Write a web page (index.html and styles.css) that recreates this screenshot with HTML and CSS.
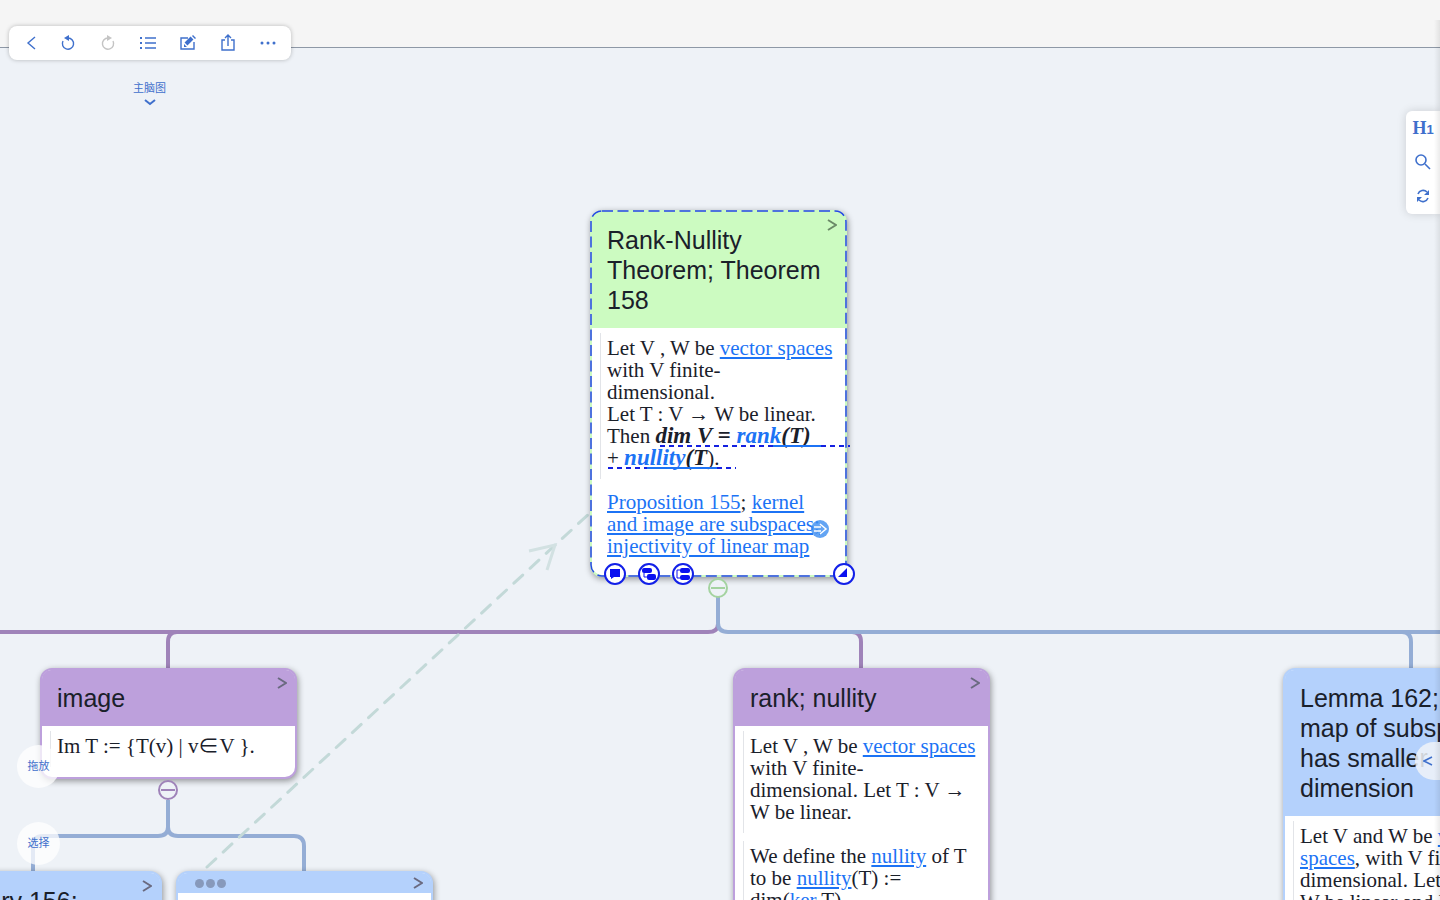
FILE: index.html
```html
<!DOCTYPE html>
<html lang="zh-CN">
  <head>
    <meta charset="UTF-8" />
    <meta name="viewport" content="width=device-width, initial-scale=1.0" />
    <title>Rank-Nullity Theorem</title>
    <link rel="stylesheet" href="styles.css">
  </head>

  <body>
    <div class="app">
      <header class="topbar"></header>

      <main class="canvas">
        <svg class="connectors" aria-hidden="true">
          <!-- root to children -->
          <path class="line purple" d="M0 584H708Q718 584 718 576" />
          <path class="line purple" d="M168 621V594Q168 584 177 584" />
          <path class="line purple" d="M861 621V594Q861 584 852 584" />
          <path class="line blue" d="M1411 621V594Q1411 584 1402 584" />
          <path class="line blue" d="M718 548V575Q718 584 728 584H3000" />
          <!-- image to children -->
          <path class="line blue" d="M168 752V779Q168 788 158 788H43Q33 788 33 798V826" />
          <path class="line blue" d="M168 779Q168 788 178 788H294Q304 788 304 798V826" />
          <!-- relation -->
          <path class="relation" d="M207 819L592 463" />
          <path class="relation-head" d="M529 503L555 497L547 522" />
        </svg>

        <article class="card green root">
          <header class="card-head">
            <h2>Rank-Nullity<br>Theorem; Theorem<br>158</h2>
            <button class="expand" aria-label="Expand"><svg width="10" height="12"><path d="M1 1L9 6L1 11" /></svg></button>
          </header>
          <div class="card-body">
            <p class="note">
              Let V , W be <a href="#">vector spaces</a><br>
              with V finite-<br>
              dimensional.<br>
              Let T : V → W be linear.<br>
              Then <b>dim V = <a class="plain" href="#">rank</a>(T)</b><br>
              + <b><a class="plain" href="#">nullity</a>(T</b>).
            </p>
            <p class="note no-bar">
              <a href="#">Proposition 155</a>; <a href="#">kernel</a><br>
              <a href="#">and image are subspaces;</a><br>
              <a href="#">injectivity of linear map</a>
            </p>
          </div>
          <svg class="selection" aria-hidden="true">
            <rect class="outline" x="1" y="1" rx="11" />
            <path class="mark-dash" d="M70 236H183M231 236H260M18 258H57M127 258H146" />
            <path class="mark" d="M183 236H231M57 258H127" />
          </svg>
          <button class="jump" aria-label="Go to link">
            <svg width="18" height="18"><path d="M3 7H10M3 11H10M9 4L15 9L9 14" /></svg>
          </button>
          <div class="handles">
            <button class="handle" aria-label="Comment">
              <svg width="22" height="22"><path d="M6 6H16V14H10L7 16V14H6Z" /></svg>
            </button>
            <button class="handle" aria-label="Add child">
              <svg width="22" height="22"><rect x="4" y="5" width="10" height="5" rx="2" /><rect x="9" y="11" width="9" height="6" rx="2" /><path class="thin" d="M6 10V14H9" /></svg>
            </button>
            <button class="handle" aria-label="Add sibling">
              <svg width="22" height="22"><rect x="8" y="5" width="10" height="5" rx="2" /><rect x="8" y="12" width="10" height="5" rx="2" /><path class="thin" d="M8 7H5V15H8" /></svg>
            </button>
            <button class="handle resize" aria-label="Resize">
              <svg width="22" height="22"><path d="M14 5V14H5Z" /></svg>
            </button>
          </div>
          <button class="fold" aria-label="Collapse"></button>
        </article>

        <article class="card purple image">
          <header class="card-head">
            <h2>image</h2>
            <button class="expand" aria-label="Expand"><svg width="10" height="12"><path d="M1 1L9 6L1 11" /></svg></button>
          </header>
          <div class="card-body">
            <p class="note">Im T := {T(v) | v∈V }.</p>
          </div>
          <button class="fold" aria-label="Collapse"></button>
        </article>

        <article class="card purple rank">
          <header class="card-head">
            <h2>rank; nullity</h2>
            <button class="expand" aria-label="Expand"><svg width="10" height="12"><path d="M1 1L9 6L1 11" /></svg></button>
          </header>
          <div class="card-body">
            <p class="note">
              Let V , W be <a href="#">vector spaces</a><br>
              with V finite-<br>
              dimensional. Let T : V →<br>
              W be linear.
            </p>
            <p class="note">
              We define the <a href="#">nullity</a> of T<br>
              to be <a href="#">nullity</a>(T) :=<br>
              dim(<a href="#">ker</a> T)
            </p>
          </div>
        </article>

        <article class="card blue lemma">
          <header class="card-head">
            <h2>Lemma 162;<br>map of subspace<br>has smaller<br>dimension</h2>
          </header>
          <div class="card-body">
            <p class="note">
              Let V and W be <a href="#">vector</a><br>
              <a href="#">spaces</a>, with V finite-<br>
              dimensional. Let T : V →<br>
              W be linear and U ≤ V
            </p>
          </div>
        </article>

        <article class="card blue corollary">
          <header class="card-head">
            <h2>Corollary 156;</h2>
            <button class="expand" aria-label="Expand"><svg width="10" height="12"><path d="M1 1L9 6L1 11" /></svg></button>
          </header>
        </article>

        <article class="card blue untitled">
          <header class="card-head">
            <span class="dots"><i></i><i></i><i></i></span>
            <button class="expand" aria-label="Expand"><svg width="10" height="12"><path d="M1 1L9 6L1 11" /></svg></button>
          </header>
          <div class="card-body"></div>
        </article>
      </main>

      <nav class="toolbar">
        <button class="back" aria-label="Back"><svg width="18" height="18"><path d="M12 3L5 9L12 15" /></svg></button>
        <button aria-label="Undo"><svg width="18" height="18"><path d="M4 7A5.6 5.6 0 1 0 9 4" /><path class="fill" d="M10 1V7L5 4Z" /></svg></button>
        <button class="off" aria-label="Redo" disabled><svg width="18" height="18"><path d="M14 7A5.6 5.6 0 1 1 9 4" /><path class="fill" d="M8 1V7L13 4Z" /></svg></button>
        <button aria-label="Outline"><svg width="18" height="18"><path d="M6 4H17M6 9H17M6 14H17" /><path class="fill" d="M1 3H3V5H1ZM1 8H3V10H1ZM1 13H3V15H1Z" /></svg></button>
        <button aria-label="Edit"><svg width="18" height="18"><path d="M9 4H2V15H15V8" /><path class="pen" d="M7 10L13 4" /><path class="fill" d="M5 13L5 10L8 13ZM14 1L17 4L16 5L13 2Z" /></svg></button>
        <button aria-label="Share"><svg width="18" height="18"><path d="M6 6H3V16H15V6H12M9 12V2M6 4L9 1L12 4" /></svg></button>
        <button aria-label="More"><svg width="18" height="18"><circle class="fill" cx="3" cy="9" r="1.5" /><circle class="fill" cx="9" cy="9" r="1.5" /><circle class="fill" cx="15" cy="9" r="1.5" /></svg></button>
      </nav>

      <button class="map-name">
        主脑图
        <svg width="12" height="7"><path d="M1 1L6 5L11 1" /></svg>
      </button>

      <aside class="dock">
        <button class="heading" aria-label="Heading 1">H<small>1</small></button>
        <button aria-label="Search"><svg width="18" height="18"><circle cx="7" cy="7" r="5" /><path d="M11 11L16 16" /></svg></button>
        <button aria-label="Sync"><svg width="18" height="18"><path d="M4 7A5.5 5.5 0 0 1 13 5M14 11A5.5 5.5 0 0 1 5 13" /><path class="fill" d="M15 3V8H10ZM3 15V10H8Z" /></svg></button>
      </aside>

      <div class="modes">
        <button>拖放</button>
        <button>选择</button>
      </div>

      <button class="drawer" aria-label="Open drawer"><svg width="10" height="10"><path d="M9 1L1 5L9 9" /></svg></button>
      <div class="edge"></div>
    </div>
  </body>
</html>
```
FILE: styles.css
```css
* {
  box-sizing: border-box;
}

body {
  margin: 0;
  font-family: "Liberation Sans", "Noto Sans CJK SC", sans-serif;
  color: #1a202a;
}

button {
  border: none;
  padding: 0;
  background: none;
  color: #3f70cc;
  font-family: inherit;
  cursor: pointer;
}

svg {
  display: block;
  fill: none;
  stroke: currentColor;
}

.app {
  position: relative;
  display: flex;
  flex-direction: column;
  height: 100vh;
  overflow: hidden;
}

.topbar {
  height: 48px;
  background-color: #f5f5f5;
  border-bottom: 1px solid #8e98a6;
}

/* Map */
.canvas {
  position: relative;
  flex: 1;
  overflow: hidden;
  background-color: #eef2f7;
}

.connectors {
  position: absolute;
  width: 100%;
  height: 100%;
}

.line {
  stroke-width: 4;
}

.line.purple {
  stroke: #9f83b9;
}

.line.blue {
  stroke: #94add5;
}

.relation {
  stroke: #c3d9d8;
  stroke-width: 3;
  stroke-dasharray: 12 10;
  stroke-linecap: round;
}

.relation-head {
  stroke: #d2e1e2;
  stroke-width: 3;
}

/* Cards */
.card {
  position: absolute;
  width: 257px;
  border: 2px solid;
  border-radius: 12px;
  background-color: #fff;
  box-shadow: 1px 2px 6px rgba(0, 0, 0, 0.4);
}

.card.green {
  border-color: #ccfbc1;
}

.card.purple {
  border-color: #bda0dc;
}

.card.blue {
  border-color: #b4d1fc;
}

.root {
  left: 590px;
  top: 162px;
  min-height: 367px;
}

.image {
  left: 40px;
  top: 620px;
  min-height: 111px;
}

.rank {
  left: 733px;
  top: 620px;
}

.lemma {
  left: 1283px;
  top: 620px;
}

.corollary {
  left: -95px;
  top: 823px;
}

.untitled {
  left: 176px;
  top: 823px;
}

.card-head {
  display: flex;
  justify-content: space-between;
  align-items: flex-start;
  padding: 13px 8px 13px 15px;
  border-radius: 9px 9px 0 0;
}

.green .card-head {
  background-color: #ccfbc1;
}

.purple .card-head {
  background-color: #bda0dc;
}

.blue .card-head {
  background-color: #b4d1fc;
}

h2 {
  margin: 0;
  font-size: 25px;
  font-weight: normal;
  line-height: 30px;
  white-space: nowrap;
}

.expand {
  margin-top: -6px;
  color: #6a6a80;
}

.green .expand {
  color: #6b8a68;
}

.expand svg {
  stroke-width: 2;
}

.untitled .card-head {
  align-items: center;
  padding: 4px 8px 4px 15px;
}

.untitled .expand {
  margin: 0;
}

.untitled .card-body {
  height: 60px;
}

.dots {
  display: flex;
  gap: 2px;
  padding-left: 2px;
}

.dots i {
  width: 9px;
  height: 9px;
  border-radius: 50%;
  background-color: #8799bb;
}

.card-body {
  padding: 5px 0 6px 8px;
}

.note {
  margin: 0;
  padding: 4px 0 10px 6px;
  border-left: 1px solid #e2e4e8;
  font-family: "Liberation Serif", serif;
  font-size: 21px;
  line-height: 22px;
  white-space: nowrap;
}

.note + .note {
  margin-top: 8px;
}

.note.no-bar {
  border-color: transparent;
}

.note b {
  font-size: 23px;
  font-style: italic;
}

.note a {
  color: #1c73f5;
  text-underline-offset: 2px;
}

.note .plain {
  text-decoration: none;
}

/* Selected card */
.selection {
  position: absolute;
  left: -2px;
  top: -2px;
  width: calc(100% + 4px);
  height: calc(100% + 4px);
  overflow: visible;
  pointer-events: none;
}

.outline {
  width: calc(100% - 2px);
  height: calc(100% - 2px);
  stroke: #2546e8;
  stroke-width: 1.5;
  stroke-dasharray: 11 4.5;
}

.mark-dash {
  stroke: #1420e0;
  stroke-width: 2;
  stroke-dasharray: 5 4;
}

.mark {
  stroke: #1c73f5;
  stroke-width: 2;
}

.jump {
  position: absolute;
  right: 16px;
  bottom: 37px;
  border-radius: 50%;
  background-color: rgba(60, 141, 240, 0.8);
  color: #fff;
}

.jump svg {
  stroke-width: 1.5;
}

.handles {
  position: absolute;
  left: 12px;
  right: -10px;
  bottom: -10px;
  display: flex;
  gap: 12px;
}

.handle {
  width: 22px;
  height: 22px;
  border: 2px solid #1220e8;
  border-radius: 50%;
  background-color: #fff;
  color: #0a10f0;
}

.handle svg {
  margin: -2px;
  fill: currentColor;
  stroke: none;
}

.handle .thin {
  fill: none;
  stroke: currentColor;
}

.handle.resize {
  margin-left: auto;
}

.fold {
  position: absolute;
  left: calc(50% - 11px);
  bottom: -23px;
  display: flex;
  align-items: center;
  justify-content: center;
  width: 20px;
  height: 20px;
  border: 2px solid #9f83b9;
  border-radius: 50%;
  background-color: #eef2f7;
  color: #9f83b9;
}

.fold::before {
  content: "";
  width: 14px;
  height: 2px;
  background-color: currentColor;
}

.green .fold {
  border-color: #a4d3a0;
  color: #a4d3a0;
}

/* Floating controls */
.toolbar {
  position: absolute;
  left: 9px;
  top: 26px;
  display: flex;
  padding: 0 3px 0 7px;
  border-radius: 8px;
  background-color: #fff;
  box-shadow: 0 0 4px rgba(0, 0, 0, 0.25);
}

.toolbar button {
  display: flex;
  align-items: center;
  justify-content: center;
  width: 40px;
  height: 34px;
}

.toolbar .back {
  width: 32px;
}

.toolbar .off {
  color: #c4c4c4;
}

.toolbar svg {
  stroke-width: 1.4;
}

.fill {
  fill: currentColor;
  stroke: none;
}

.toolbar .pen {
  stroke-width: 4;
}

.map-name {
  position: absolute;
  left: 133px;
  top: 80px;
  display: flex;
  flex-direction: column;
  align-items: center;
  gap: 3px;
  font-size: 11px;
  line-height: 16px;
}

.map-name svg {
  stroke-width: 2;
}

.dock {
  position: absolute;
  right: 0;
  top: 111px;
  display: flex;
  flex-direction: column;
  width: 34px;
  padding-bottom: 1px;
  border-radius: 6px 0 0 6px;
  background-color: #fff;
  box-shadow: 0 0 10px rgba(0, 0, 0, 0.15);
}

.dock button {
  display: flex;
  align-items: center;
  justify-content: center;
  height: 34px;
}

.dock svg {
  stroke-width: 1.6;
}

.dock .heading {
  align-items: baseline;
  padding-top: 8px;
  font-family: "Liberation Serif", serif;
  font-size: 18px;
  font-weight: bold;
  line-height: 18px;
}

.dock small {
  font-family: "Liberation Sans", sans-serif;
  font-size: 13px;
}

.modes {
  position: absolute;
  left: 17px;
  bottom: 35px;
  display: flex;
  flex-direction: column;
  gap: 34px;
}

.modes button {
  width: 43px;
  height: 43px;
  padding-bottom: 3px;
  border-radius: 50%;
  background-color: rgba(255, 255, 255, 0.75);
  font-size: 11px;
}

.drawer {
  position: absolute;
  right: 0;
  bottom: 120px;
  display: flex;
  align-items: center;
  justify-content: center;
  width: 25px;
  height: 38px;
  border-radius: 19px 0 0 19px;
  background-color: rgba(240, 243, 248, 0.85);
}

.drawer svg {
  stroke-width: 1.6;
}

.edge {
  position: absolute;
  right: 0;
  top: 20px;
  bottom: 0;
  width: 6px;
  background: linear-gradient(to right, transparent, rgba(0, 0, 0, 0.08));
  pointer-events: none;
}
```
